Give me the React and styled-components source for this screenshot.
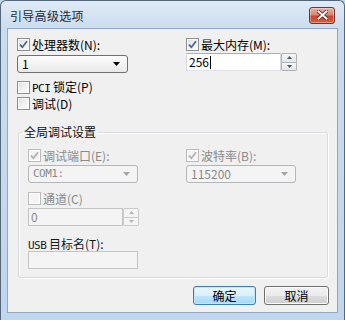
import React from "react";
import styled, { createGlobalStyle } from "styled-components";

const GlobalStyle = createGlobalStyle`
  html, body {
    margin: 0;
    padding: 0;
    background: #c3d7ec;
  }
  body {
    font-family: "Noto Sans CJK SC", "Liberation Sans", sans-serif;
    font-size: 12px;
    color: #000;
  }
`;

const Window = styled.div`
  width: 345px;
  height: 320px;
  box-sizing: border-box;
  border: 1px solid #56677b;
  border-bottom: none;
  border-radius: 6px 6px 0 0;
  background: linear-gradient(180deg, #dfeaf6 0%, #cadcef 30px, #c0d6ec 100%);
  display: flex;
  flex-direction: column;
  padding: 0 6px 7px 6px;
`;

const TitleBar = styled.div`
  height: 26px;
  display: flex;
  align-items: center;
  justify-content: space-between;
  padding: 1px 3px 0 3px;
`;

const Title = styled.span`
  font-size: 12px;
  color: #1c2a3a;
  letter-spacing: 0.3px;
`;

const CloseButton = styled.div`
  width: 26px;
  height: 17px;
  box-sizing: border-box;
  border: 1px solid #7a3126;
  border-radius: 3px;
  background: linear-gradient(180deg, #eab0a2 0%, #dc8470 45%, #c8462e 55%, #d4623f 100%);
  box-shadow: inset 0 0 0 1px rgba(255, 255, 255, 0.35);
  display: flex;
  align-items: center;
  justify-content: center;
`;

const Client = styled.div`
  flex: 1;
  background: #f0f0f0;
  border: 1px solid #93a7c0;
  display: flex;
  flex-direction: column;
  padding: 9px 8px 0 9px;
`;

const TopGrid = styled.div`
  display: grid;
  grid-template-columns: 169px 112px;
`;

const Column = styled.div`
  display: flex;
  flex-direction: column;
  align-items: flex-start;
`;

const CheckRow = styled.label`
  display: flex;
  align-items: center;
  gap: 2px;
  height: 13px;
  line-height: 13px;
  color: ${(p) => (p.$disabled ? "#8a8a8a" : "#000")};
  margin-top: ${(p) => p.$top || 0}px;
  white-space: nowrap;
`;

const Box = styled.span`
  width: 13px;
  height: 13px;
  box-sizing: border-box;
  border: 1px solid ${(p) => (p.$disabled ? "#bcbcbc" : "#8e8f8f")};
  background: ${(p) =>
    p.$disabled
      ? "#f4f4f4"
      : "linear-gradient(135deg, #dcdcdc 0%, #f0f0f0 50%, #fdfdfd 100%)"};
  box-shadow: inset 0 0 0 1px #fff;
  display: flex;
  align-items: center;
  justify-content: center;
  flex-shrink: 0;
`;

const Combo = styled.div`
  width: ${(p) => p.$width}px;
  height: 18px;
  box-sizing: border-box;
  margin-top: ${(p) => p.$top || 0}px;
  border: 1px solid ${(p) => (p.$disabled ? "#b3b7ba" : "#707070")};
  border-radius: 3px;
  background: ${(p) =>
    p.$disabled
      ? "#f4f4f4"
      : "linear-gradient(180deg, #fdfdfd 0%, #f3f3f3 50%, #e9e9e9 100%)"};
  color: ${(p) => (p.$disabled ? "#8a8a8a" : "#000")};
  display: flex;
  align-items: center;
  justify-content: space-between;
  padding: 0 7px 0 4px;
  line-height: 16px;
`;

const TextBox = styled.div`
  width: ${(p) => p.$width}px;
  height: 18px;
  box-sizing: border-box;
  margin-top: ${(p) => p.$top || 0}px;
  border: 1px solid ${(p) => (p.$disabled ? "#c4c4c4" : "#abadb3")};
  border-left-color: ${(p) => (p.$disabled ? "#c4c4c4" : "#d8d9de")};
  border-right-color: ${(p) => (p.$disabled ? "#c4c4c4" : "#d8d9de")};
  border-bottom-color: ${(p) => (p.$disabled ? "#c4c4c4" : "#dfe4ea")};
  background: ${(p) => (p.$disabled ? "#f4f4f4" : "#fff")};
  color: ${(p) => (p.$disabled ? "#8a8a8a" : "#000")};
  display: flex;
  align-items: center;
  padding-left: 2px;
  line-height: 16px;
`;

const SpinWrap = styled.div`
  display: flex;
  align-items: stretch;
  margin-top: ${(p) => p.$top || 0}px;
`;

const SpinButtons = styled.div`
  width: 16px;
  height: 18px;
  display: flex;
  flex-direction: column;
`;

const SpinHalf = styled.div`
  flex: 1;
  box-sizing: border-box;
  border: 1px solid ${(p) => (p.$disabled ? "#c9c9c9" : "#aeb3b9")};
  border-top-width: ${(p) => (p.$down ? 0 : 1)}px;
  border-radius: ${(p) => (p.$down ? "0 0 2px 2px" : "2px 2px 0 0")};
  background: ${(p) =>
    p.$disabled ? "#f4f4f4" : "linear-gradient(180deg, #f7f7f7, #e3e6ea)"};
  display: flex;
  align-items: center;
  justify-content: center;
`;

const Caret = styled.span`
  display: inline-block;
  width: 1px;
  height: 13px;
  background: #000;
  margin-left: 1px;
`;

const OptionList = styled.div`
  display: flex;
  flex-direction: column;
  gap: 3px;
  margin-top: 8px;
`;

const Group = styled.fieldset`
  margin: 15px 0 0 1px;
  width: 310px;
  box-sizing: border-box;
  border: 1px solid #d5dbe0;
  border-radius: 3px;
  box-shadow: inset 1px 1px 0 #fff, 1px 1px 0 #fff;
  padding: 0 9px 8px 9px;
`;

const Legend = styled.legend`
  padding: 0 2px;
  margin-left: -6px;
  line-height: 14px;
  font-size: 12px;
  color: #111;
`;

const GroupGrid = styled.div`
  display: grid;
  grid-template-columns: 158px 112px;
  margin-top: 10px;
`;

const PlainLabel = styled.div`
  height: 13px;
  line-height: 13px;
  margin-top: ${(p) => p.$top || 0}px;
  color: #1a1a1a;
  white-space: nowrap;
`;

const Latin = styled.span`
  font-family: "DejaVu Sans Mono", "Liberation Mono", monospace;
  font-size: 11px;
  letter-spacing: -0.5px;
`;

const ButtonRow = styled.div`
  display: flex;
  justify-content: flex-end;
  gap: 8px;
  margin-top: 8px;
`;

const Button = styled.div`
  width: ${(p) => p.$width}px;
  height: 19px;
  box-sizing: border-box;
  border: 1px solid ${(p) => (p.$default ? "#3c7fb1" : "#707070")};
  border-radius: 3px;
  background: ${(p) =>
    p.$default
      ? "linear-gradient(180deg, #eaf6fd 0%, #d9f0fc 50%, #bee6fd 51%, #a7d9f5 100%)"
      : "linear-gradient(180deg, #f2f2f2 0%, #ebebeb 50%, #dddddd 51%, #cfcfcf 100%)"};
  box-shadow: inset 0 0 0 1px ${(p) => (p.$default ? "#c4e5f6" : "#fcfcfc")};
  display: flex;
  align-items: center;
  justify-content: center;
  line-height: 17px;
`;

function CheckBox({ checked, disabled }) {
  return (
    <Box $disabled={disabled}>
      {checked && (
        <svg width="9" height="9" viewBox="0 0 9 9">
          <path
            d="M1 4.6 L3.4 7.2 L8 1.2"
            fill="none"
            stroke={disabled ? "#b0b0b0" : "#4a5f97"}
            strokeWidth="1.7"
          />
        </svg>
      )}
    </Box>
  );
}

function Arrow({ disabled }) {
  return (
    <svg width="7" height="4" viewBox="0 0 7 4">
      <path d="M0 0 H7 L3.5 4 Z" fill={disabled ? "#a5a5a5" : "#000"} />
    </svg>
  );
}

function SpinArrow({ up, disabled }) {
  return (
    <svg width="5" height="3" viewBox="0 0 5 3">
      <path
        d={up ? "M0 3 H5 L2.5 0 Z" : "M0 0 H5 L2.5 3 Z"}
        fill={disabled ? "#b5b5b5" : "#4d5560"}
      />
    </svg>
  );
}

function SpinBox({ value, disabled, top, caret }) {
  return (
    <SpinWrap $top={top}>
      <TextBox $width={95} $disabled={disabled}>
        {value}
        {caret && <Caret />}
      </TextBox>
      <SpinButtons>
        <SpinHalf $disabled={disabled}>
          <SpinArrow up disabled={disabled} />
        </SpinHalf>
        <SpinHalf $down $disabled={disabled}>
          <SpinArrow disabled={disabled} />
        </SpinHalf>
      </SpinButtons>
    </SpinWrap>
  );
}

function CheckOption({ checked, disabled, top, children }) {
  return (
    <CheckRow $disabled={disabled} $top={top}>
      <CheckBox checked={checked} disabled={disabled} />
      <span>{children}</span>
    </CheckRow>
  );
}

export default function App() {
  return (
    <>
      <GlobalStyle />
      <Window>
        <TitleBar>
          <Title>引导高级选项</Title>
          <CloseButton>
            <svg width="11" height="10" viewBox="0 0 11 10">
              <path
                d="M1.5 1.5 L9.5 8.5 M9.5 1.5 L1.5 8.5"
                stroke="#4a1a12"
                strokeWidth="3.4"
                strokeLinecap="square"
              />
              <path
                d="M1.5 1.5 L9.5 8.5 M9.5 1.5 L1.5 8.5"
                stroke="#fff"
                strokeWidth="2"
                strokeLinecap="square"
              />
            </svg>
          </CloseButton>
        </TitleBar>
        <Client>
          <TopGrid>
            <Column>
              <CheckOption checked>处理器数(N):</CheckOption>
              <Combo $width={111} $top={4}>
                <span>1</span>
                <Arrow />
              </Combo>
            </Column>
            <Column>
              <CheckOption checked>最大内存(M):</CheckOption>
              <SpinBox value="256" top={2} caret />
            </Column>
          </TopGrid>
          <OptionList>
            <CheckOption>
              <Latin>PCI</Latin> 锁定(P)
            </CheckOption>
            <CheckOption>调试(D)</CheckOption>
          </OptionList>
          <Group>
            <Legend>全局调试设置</Legend>
            <GroupGrid>
              <Column>
                <CheckOption checked disabled>
                  调试端口(E):
                </CheckOption>
                <Combo $width={110} $top={3} $disabled>
                  <Latin>COM1:</Latin>
                  <Arrow disabled />
                </Combo>
                <CheckOption disabled top={9}>
                  通道(C)
                </CheckOption>
                <SpinBox value="0" top={3} disabled />
                <PlainLabel $top={11}>
                  <Latin>USB</Latin> 目标名(T):
                </PlainLabel>
                <TextBox $width={110} $top={1} $disabled />
              </Column>
              <Column>
                <CheckOption checked disabled>
                  波特率(B):
                </CheckOption>
                <Combo $width={110} $top={3} $disabled>
                  <span>115200</span>
                  <Arrow disabled />
                </Combo>
              </Column>
            </GroupGrid>
          </Group>
          <ButtonRow>
            <Button $width={63} $default>
              确定
            </Button>
            <Button $width={65}>取消</Button>
          </ButtonRow>
        </Client>
      </Window>
    </>
  );
}
